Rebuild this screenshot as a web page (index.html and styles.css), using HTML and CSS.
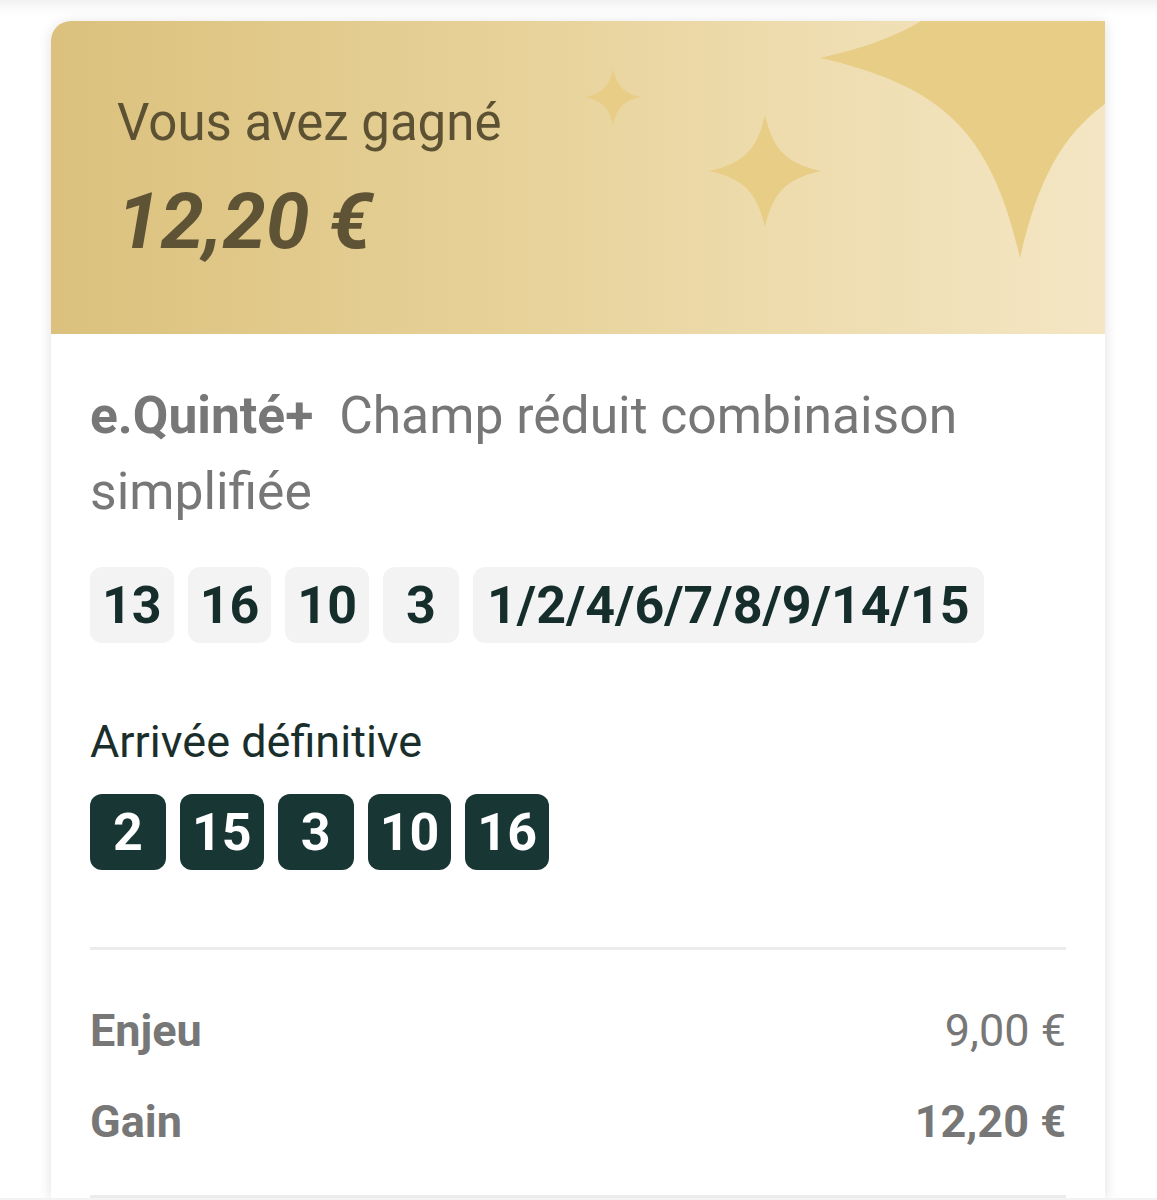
FILE: index.html
```html
<!DOCTYPE html>
<html lang="fr">
  <head>
    <meta charset="UTF-8" />
    <meta name="viewport" content="width=device-width, initial-scale=1.0" />
    <title>Pari gagnant</title>
    <link rel="stylesheet" href="styles.css">
  </head>
  <body>
    <div id="ticket" class="card">
      <div class="win-header">
        <svg class="sparkles" width="1054" height="313" viewBox="0 0 1054 313">
          <!-- 4-point sparkles, coords relative to the header -->
          <path transform="translate(562 76) scale(28)" d="M0,-1 C0.14,-0.38 0.38,-0.14 1,0 C0.38,0.14 0.14,0.38 0,1 C-0.14,0.38 -0.38,0.14 -1,0 C-0.38,-0.14 -0.14,-0.38 0,-1 Z" />
          <path transform="translate(714 150) scale(56)" d="M0,-1 C0.14,-0.38 0.38,-0.14 1,0 C0.38,0.14 0.14,0.38 0,1 C-0.14,0.38 -0.38,0.14 -1,0 C-0.38,-0.14 -0.14,-0.38 0,-1 Z" />
          <path transform="translate(969 37) scale(200)" d="M0,-1 C0.14,-0.38 0.38,-0.14 1,0 C0.38,0.14 0.14,0.38 0,1 C-0.14,0.38 -0.38,0.14 -1,0 C-0.38,-0.14 -0.14,-0.38 0,-1 Z" />
        </svg>
        <p class="win-label">Vous avez gagné</p>
        <p class="win-amount">12,20 €</p>
      </div>

      <div class="card-body">
        <p class="bet-title"><b>e.Quinté+</b> <span>Champ réduit combinaison</span> <span>simplifiée</span></p>

        <div class="chips">
          <span class="chip">13</span>
          <span class="chip">16</span>
          <span class="chip">10</span>
          <span class="chip">3</span>
          <span class="chip wide">1/2/4/6/7/8/9/14/15</span>
        </div>

        <p class="arrival-label">Arrivée définitive</p>
        <div class="arrival">
          <span class="box">2</span>
          <span class="box">15</span>
          <span class="box">3</span>
          <span class="box">10</span>
          <span class="box">16</span>
        </div>

        <hr class="sep" />

        <div class="line">
          <span class="line-label">Enjeu</span>
          <span class="line-value">9,00 €</span>
        </div>
        <div class="line">
          <span class="line-label">Gain</span>
          <span class="line-value strong">12,20 €</span>
        </div>

        <hr class="sep last" />
      </div>
    </div>
  </body>
</html>
```

FILE: styles.css
```css
body {
  margin: 0;
  font-family: Roboto, "Noto Sans", sans-serif;
  background: linear-gradient(180deg, #f2f2f2 0px, #fafafa 8px, #ffffff 16px);
  overflow: hidden;
}
.card {
  margin: 21px 52px 0 51px;
  background-color: white;
  border-radius: 20px 0 0 0;
  box-shadow: 0 2px 14px rgba(0, 0, 0, 0.13);
  overflow: hidden;
}
.win-header {
  position: relative;
  height: 313px;
  box-sizing: border-box;
  padding: 72px 0 0 66px;
  background: linear-gradient(90deg, #dbc17d 0%, #e6d096 40%, #eedcae 70%, #f4e6c4 100%);
}
.sparkles {
  position: absolute;
  top: 0;
  left: 0;
  fill: #e8cd86;
}
.win-label {
  position: relative;
  margin: 0;
  font-size: 51px;
  line-height: 60px;
  color: #5c5132;
}
.win-amount {
  position: relative;
  margin: 31px 0 0 0;
  font-size: 78px;
  line-height: 76px;
  font-weight: bold;
  font-style: italic;
  color: #5e5335;
}
.card-body {
  padding: 44px 39px 0 39px;
}
.bet-title {
  margin: 0;
  font-size: 51.6px;
  line-height: 76px;
  color: #777777;
}
.bet-title b {
  font-weight: bold;
  margin-right: 13px;
}
.chips {
  display: flex;
  flex-wrap: wrap;
  gap: 14px;
  margin-top: 37px;
}
.chip {
  min-width: 76px;
  height: 76px;
  box-sizing: border-box;
  padding: 0 12px;
  display: flex;
  align-items: center;
  justify-content: center;
  background-color: #f3f3f3;
  border-radius: 12px;
  font-size: 52px;
  font-weight: bold;
  color: #152d2b;
}
.chip.wide {
  padding: 0 14px;
}
.arrival-label {
  margin: 70px 0 0 0;
  font-size: 45px;
  line-height: 57px;
  color: #1a2e2c;
}
.arrival {
  display: flex;
  gap: 14px;
  margin-top: 24px;
}
.box {
  min-width: 76px;
  height: 76px;
  box-sizing: border-box;
  padding: 0 12px;
  display: flex;
  align-items: center;
  justify-content: center;
  background-color: #183634;
  border-radius: 12px;
  font-size: 52px;
  font-weight: bold;
  color: #ffffff;
}
.sep {
  margin: 77px 0 0 0;
  border: none;
  height: 3px;
  background-color: #ececec;
}
.line {
  display: flex;
  justify-content: space-between;
  font-size: 45px;
  line-height: 57px;
  color: #777777;
  margin-top: 52px;
}
.line + .line {
  margin-top: 34px;
}
.line-label {
  font-weight: bold;
}
.strong {
  font-weight: bold;
}
.sep.last {
  margin-top: 45px;
}
```
